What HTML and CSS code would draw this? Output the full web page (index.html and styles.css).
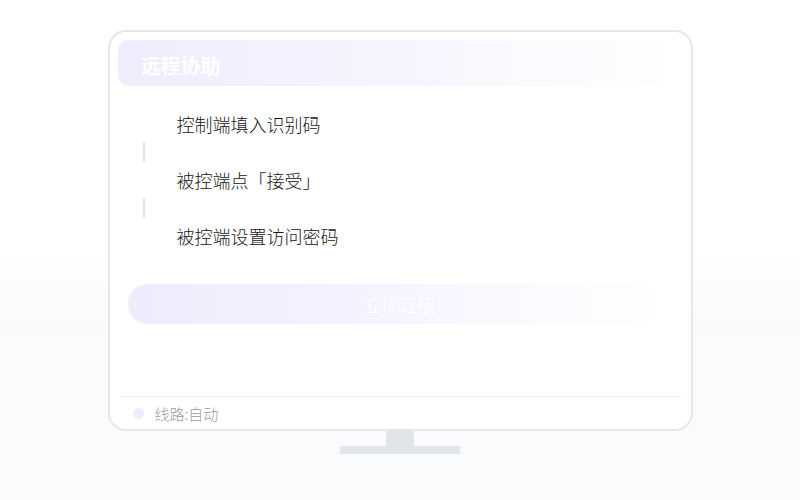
FILE: index.html
```html
<!DOCTYPE html>
<html lang="zh-CN">
<head>
<meta charset="utf-8">
<title>远程协助</title>
<link rel="stylesheet" href="styles.css">
</head>
<body>
<div class="page">
  <div class="monitor">
    <div class="header">远程协助</div>
    <div class="steps">
      <div class="step">控制端填入识别码</div>
      <div class="connector"></div>
      <div class="step">被控端点「接受」</div>
      <div class="connector"></div>
      <div class="step">被控端设置访问密码</div>
    </div>
    <div class="connect-btn">立即连接</div>
    <div class="spacer"></div>
    <div class="footer">
      <span class="dot"></span>
      <span class="route">线路:自动</span>
    </div>
  </div>
  <div class="neck"></div>
  <div class="base"></div>
</div>
</body>
</html>
```

FILE: styles.css
```css
html, body {
  margin: 0;
  padding: 0;
}

body {
  width: 800px;
  height: 500px;
  overflow: hidden;
  font-family: "Noto Sans CJK SC", "Noto Sans", sans-serif;
  background: linear-gradient(180deg, #ffffff 0%, #ffffff 49%, #f9fafb 64%, #fafbfc 100%);
}

.page {
  display: flex;
  flex-direction: column;
  align-items: center;
  padding-top: 30px;
}

.monitor {
  box-sizing: border-box;
  width: 585px;
  height: 401px;
  border: 2px solid #e4e7ec;
  border-radius: 18px;
  background: #ffffff;
  display: flex;
  flex-direction: column;
  padding-top: 8px;
}

.header {
  box-sizing: border-box;
  margin: 0 8px;
  height: 46px;
  border-radius: 11px;
  background: linear-gradient(90deg, #efecfd 0%, #f6f5fe 50%, #fcfcff 85%, #ffffff 100%);
  display: flex;
  align-items: center;
  padding: 5px 0 0 23px;
  font-size: 20px;
  font-weight: 700;
  color: #ffffff;
}

.steps {
  margin-top: 26px;
  display: flex;
  flex-direction: column;
}

.step {
  margin-left: 67px;
  height: 24px;
  line-height: 24px;
  font-size: 18px;
  font-weight: 300;
  color: #161618;
  white-space: nowrap;
}

.connector {
  margin: 6px 0 6px 33px;
  width: 2px;
  height: 20px;
  background: #e2e5ea;
}

.connect-btn {
  margin: 36px 18px 0;
  height: 40px;
  border-radius: 20px;
  background: linear-gradient(90deg, #eeebfd 0%, #f5f3fe 45%, #fcfbff 80%, #ffffff 100%);
  display: flex;
  align-items: center;
  justify-content: center;
  font-size: 18px;
  font-weight: 300;
  color: #ffffff;
}

.spacer {
  flex: 1;
}

.footer {
  margin: 0 10px;
  height: 32px;
  border-top: 1px solid #eef0f3;
  display: flex;
  align-items: center;
  padding-left: 13px;
}

.dot {
  width: 11px;
  height: 11px;
  border-radius: 50%;
  background: #efecfd;
}

.route {
  margin-left: 11px;
  font-size: 15px;
  font-weight: 300;
  color: #959ba4;
}

.neck {
  width: 28px;
  height: 15px;
  background: #e1e5e9;
}

.base {
  width: 120px;
  height: 8px;
  background: #e1e5e9;
}
```
